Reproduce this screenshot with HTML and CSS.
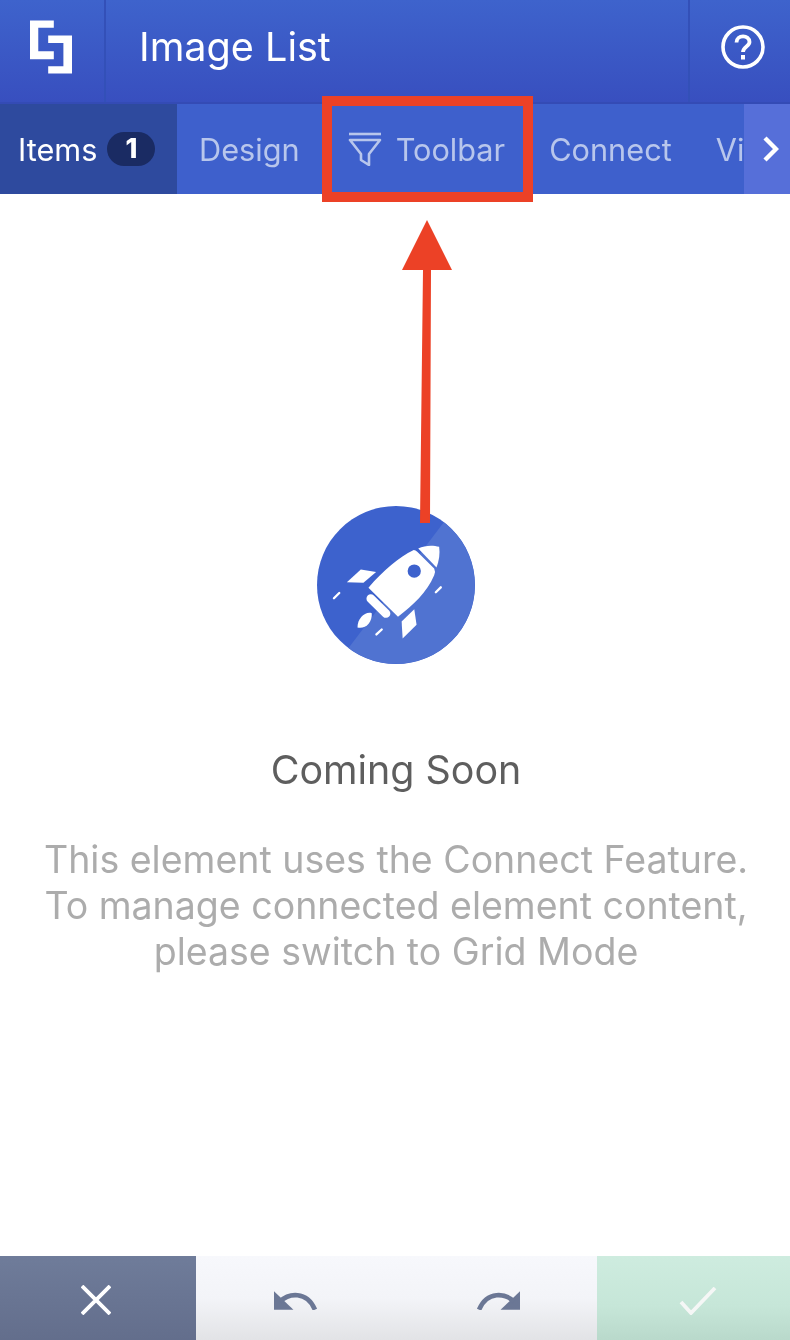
FILE: index.html
```html
<!DOCTYPE html>
<html lang="en">
  <head>
    <meta charset="UTF-8" />
    <title>Image List</title>
    <link rel="stylesheet" href="styles.css">
  </head>
  <body>
    <div class="page">
      <header class="topbar">
        <div class="logo-cell">
          <svg class="logo" viewBox="90 60 127 160">
            <path d="M90 60H162V82H115V153H162V177H90Z" fill="#fff" />
            <path d="M145 105H217V220H145V198H191V128H145Z" fill="#fff" />
          </svg>
        </div>
        <div class="title">Image List</div>
        <div class="help-cell">
          <svg class="help" viewBox="0 0 44 44" fill="none" stroke="#fff">
            <circle cx="22" cy="22" r="20" stroke-width="3.6" />
            <path d="M15.5 17.5C15.5 9.5 28.5 9.5 28.5 17C28.5 21.5 22 21.5 22 27" stroke-width="3.8" />
            <path d="M22 30V34.5" stroke-width="4" />
          </svg>
        </div>
      </header>

      <nav class="tabs">
        <div class="tab tab-active">Items <span class="badge">1</span></div>
        <div class="tab">Design</div>
        <div class="tab tab-icon">
          <svg class="funnel" viewBox="0 0 34 34" fill="none" stroke="#b8c6ec" stroke-width="2.6">
            <path d="M1 2H33" />
            <path d="M2 8H32L21 22V33L13 28V22Z" stroke-linejoin="round" />
          </svg>
          Toolbar
        </div>
        <div class="tab">Connect</div>
        <div class="tab">Vi</div>
        <div class="tab-next">
          <svg viewBox="0 0 16 26" fill="none" stroke="#fff" stroke-width="4.4">
            <path d="M2 2L13 13L2 24" />
          </svg>
        </div>
      </nav>

      <main class="content">
        <svg class="rocket" viewBox="50 47 476 476">
          <circle cx="288" cy="285" r="238" fill="#3d62cd" />
          <path d="M432 96A238 238 0 0 1 456 453A238 238 0 0 1 145 475Z" fill="#5073d1" />
          <g fill="#fff">
            <path d="M340 180Q346 179 352 185L403 235Q408 245 403 256C380 310 340 345 294 381L205 293C250 240 298 200 340 180Z" />
            <path d="M355 175C375 165 400 165 418 170C421 190 418 212 410 232Z" />
            <path d="M140 277L182 238L228 246L190 278Z" />
            <path d="M308 446L305 395L343 358L350 405Z" />
            <path d="M215 370C195 364 172 385 172 413C195 419 217 398 215 370Z" />
          </g>
          <circle cx="343" cy="243" r="20" fill="#3d62cd" />
          <path d="M212 326L258 371" stroke="#fff" stroke-width="26" stroke-linecap="round" />
          <path d="M101 325L117 309M229 434L245 419M408 307L423 292" stroke="#fff" stroke-width="7" stroke-linecap="round" />
        </svg>
        <h1 class="heading">Coming Soon</h1>
        <p class="note">
          This element uses the Connect Feature.<br />
          To manage connected element content,<br />
          please switch to Grid Mode
        </p>
      </main>

      <footer class="actions">
        <div class="action action-cancel">
          <svg class="icon-x" viewBox="0 0 30 30" stroke="#fff" stroke-width="3.8">
            <path d="M1 1L29 29M29 1L1 29" />
          </svg>
        </div>
        <div class="action action-history">
          <svg class="icon-undo" viewBox="0 0 42 18">
            <path d="M0 0V18H19Z" fill="#6b7795" />
            <path d="M6 10C14 2 32 -1 40 18" fill="none" stroke="#6b7795" stroke-width="4.6" />
          </svg>
          <svg class="icon-undo icon-redo" viewBox="0 0 42 18">
            <path d="M0 0V18H19Z" fill="#6b7795" />
            <path d="M6 10C14 2 32 -1 40 18" fill="none" stroke="#6b7795" stroke-width="4.6" />
          </svg>
        </div>
        <div class="action action-confirm">
          <svg class="icon-check" viewBox="0 0 38 28" fill="none" stroke="#f5f7f6" stroke-width="3.8">
            <path d="M2 15L12 26L36 1" />
          </svg>
        </div>
      </footer>

      <!-- annotation drawn over the screenshot -->
      <div class="callout-box"></div>
      <svg class="callout-arrow" viewBox="0 0 60 310">
        <path d="M30 0L55 50H34L33 303H23L26 50H5Z" fill="#ec4126" />
      </svg>
    </div>
  </body>
</html>
```

FILE: styles.css
```css
* {
  box-sizing: border-box;
}
body {
  margin: 0;
  font-family: Inter, "Liberation Sans", sans-serif;
  background-color: #fff;
}
.page {
  position: relative;
  width: 790px;
  height: 1340px;
  display: flex;
  flex-direction: column;
  overflow: hidden;
  will-change: transform;
}

.topbar {
  height: 104px;
  display: flex;
  background: linear-gradient(#3e63cc, #384fbf);
  border-bottom: 2px solid #344bb5;
}
.logo-cell {
  width: 106px;
  padding: 20px 0 0 30px;
  border-right: 2px solid #3350b8;
}
.logo {
  display: block;
  width: 42px;
  height: 54px;
}
.title {
  flex: 1;
  padding-left: 33px;
  font-size: 39.6px;
  line-height: 94px;
  color: #fff;
}
.help-cell {
  width: 102px;
  padding: 25px 0 0 31px;
  border-left: 2px solid #3350b8;
}
.help {
  display: block;
  width: 44px;
  height: 44px;
}

.tabs {
  position: relative;
  height: 90px;
  display: flex;
  background-color: #3e60cc;
  overflow: hidden;
}
.tab {
  flex-shrink: 0;
  display: flex;
  align-items: center;
  padding: 0 22px;
  font-size: 30.7px;
  color: #b8c6ec;
}
.tab-active {
  width: 177px;
  padding: 0 0 0 18px;
  background-color: #2e4a9e;
  color: #fff;
}
.badge {
  width: 48px;
  height: 34px;
  margin-left: 10px;
  border-radius: 17px;
  background-color: #1a2b63;
  font-size: 27px;
  font-weight: 800;
  line-height: 34px;
  text-align: center;
}
.tab-icon {
  padding-left: 26px;
}
.funnel {
  width: 34px;
  height: 34px;
  margin-right: 14px;
}
.tab-next {
  position: absolute;
  top: 0;
  right: 0;
  width: 46px;
  height: 90px;
  display: flex;
  align-items: center;
  justify-content: center;
  background-color: #566fd9;
}
.tab-next svg {
  width: 16px;
  height: 26px;
  margin-left: 8px;
}

.content {
  flex: 1;
  display: flex;
  flex-direction: column;
  align-items: center;
  padding: 312px 0 0 2px;
  text-align: center;
}
.rocket {
  width: 158px;
  height: 158px;
}
.heading {
  margin: 81px 0 0;
  font-size: 39.4px;
  font-weight: 400;
  line-height: 50px;
  color: #5e5e5e;
}
.note {
  margin: 42px 0 0;
  font-size: 37.5px;
  line-height: 46px;
  color: #acacac;
}

.actions {
  height: 84px;
  display: flex;
}
.action {
  display: flex;
  align-items: center;
  justify-content: center;
}
.action-cancel {
  width: 196px;
  background: linear-gradient(#6f7c9a, #636e8c);
}
.action-history {
  flex: 1;
  gap: 160px;
  background: linear-gradient(#f7f8fc, #f3f4f8 50%, #e2e3e6);
}
.action-confirm {
  width: 193px;
  background: linear-gradient(#ceecdf, #c6e6d8 60%, #b9d9cb);
}
.icon-x {
  width: 30px;
  height: 30px;
  margin: 4px 4px 0 0;
}
.icon-undo {
  width: 43px;
  height: 19px;
  margin-top: 4px;
}
.icon-redo {
  transform: scaleX(-1);
}
.icon-check {
  width: 38px;
  height: 28px;
  margin: 6px 0 0 8px;
}

.callout-box {
  position: absolute;
  left: 322px;
  top: 96px;
  width: 211px;
  height: 106px;
  border: 10px solid #ec4126;
}
.callout-arrow {
  position: absolute;
  left: 397px;
  top: 220px;
  width: 60px;
  height: 310px;
}
```
